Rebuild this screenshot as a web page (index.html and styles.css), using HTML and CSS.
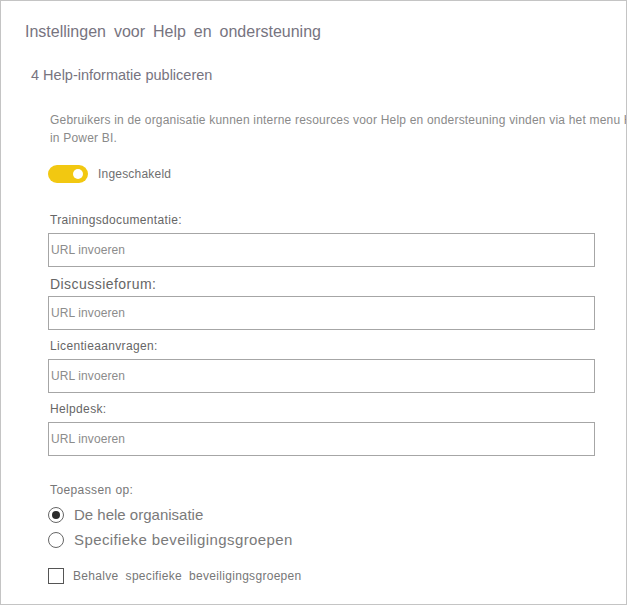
FILE: index.html
```html
<!DOCTYPE html>
<html lang="nl">
<head>
<meta charset="utf-8">
<title>Instellingen voor Help en ondersteuning</title>
<link rel="stylesheet" href="styles.css">
</head>
<body>
<div class="frame">
  <h1 class="title">Instellingen voor Help en ondersteuning</h1>
  <h2 class="subtitle">4 Help-informatie publiceren</h2>
  <div class="section">
    <p class="desc">Gebruikers in de organisatie kunnen interne resources voor Help en ondersteuning vinden via het menu Help<br>in Power BI.</p>
    <div class="toggle-row">
      <span class="toggle"><span class="knob"></span></span>
      <span class="toggle-label">Ingeschakeld</span>
    </div>
    <div class="field first">
      <label class="label">Trainingsdocumentatie:</label>
      <div class="input">URL invoeren</div>
    </div>
    <div class="field">
      <label class="label big">Discussieforum:</label>
      <div class="input">URL invoeren</div>
    </div>
    <div class="field">
      <label class="label">Licentieaanvragen:</label>
      <div class="input">URL invoeren</div>
    </div>
    <div class="field">
      <label class="label">Helpdesk:</label>
      <div class="input">URL invoeren</div>
    </div>
    <div class="apply">Toepassen op:</div>
    <div class="radio-row"><span class="radio checked"></span><span>De hele organisatie</span></div>
    <div class="radio-row"><span class="radio"></span><span class="wide">Specifieke beveiligingsgroepen</span></div>
    <div class="check-row"><span class="checkbox"></span><span class="check-label">Behalve specifieke beveiligingsgroepen</span></div>
  </div>
</div>
</body>
</html>
```

FILE: styles.css
```css
html, body {
  margin: 0;
  padding: 0;
  background: #ffffff;
}

body {
  font-family: "Liberation Sans", Arial, sans-serif;
  color: #6f6f6f;
}

.frame {
  width: 627px;
  height: 605px;
  box-sizing: border-box;
  border: 1px solid #c4c4c4;
  padding-left: 24px;
  overflow: hidden;
}

.title {
  margin: 20px 0 0 0;
  font-size: 16px;
  line-height: 22px;
  font-weight: normal;
  color: #77747f;
  word-spacing: 3.5px;
}

.subtitle {
  margin: 22px 0 0 6px;
  font-size: 14.5px;
  line-height: 20px;
  font-weight: normal;
  color: #77747f;
}

.section {
  padding-left: 25px;
}

.desc {
  margin: 26px 0 0 0;
  width: 620px;
  font-size: 12px;
  line-height: 18px;
  color: #8a8a8a;
  letter-spacing: 0.2px;
  white-space: nowrap;
}

.toggle-row {
  margin-top: 17px;
  display: flex;
  align-items: center;
  gap: 10px;
  height: 20px;
  margin-left: -2px;
}

.toggle {
  width: 40px;
  height: 18px;
  border-radius: 9px;
  background: #f2c811;
  display: flex;
  align-items: center;
  justify-content: flex-end;
  padding-right: 5px;
  box-sizing: border-box;
}

.knob {
  width: 10px;
  height: 10px;
  border-radius: 50%;
  background: #ffffff;
}

.toggle-label {
  font-size: 12px;
  color: #6f6f6f;
  letter-spacing: 0.2px;
}

.field {
  margin-top: 8px;
}

.field.first {
  margin-top: 28px;
}

.label {
  display: block;
  font-size: 12px;
  line-height: 16px;
  color: #666666;
  letter-spacing: 0.35px;
  margin-bottom: 5px;
}

.label.big {
  font-size: 14px;
  line-height: 18px;
  letter-spacing: 0.45px;
  margin-bottom: 3px;
}

.input {
  margin-left: -2px;
  width: 547px;
  height: 34px;
  box-sizing: border-box;
  border: 1px solid #a6a6a6;
  padding-left: 2px;
  font-size: 12px;
  line-height: 32px;
  color: #8c8c8c;
  letter-spacing: 0.1px;
}

.apply {
  margin-top: 26px;
  font-size: 12px;
  line-height: 16px;
  color: #777777;
  letter-spacing: 0.4px;
}

.radio-row {
  margin-top: 0;
  display: flex;
  align-items: center;
  gap: 10px;
  height: 25px;
  margin-left: -2px;
  font-size: 15px;
  color: #7a7a7a;
}

.radio-row .wide {
  letter-spacing: 0.4px;
}

.apply + .radio-row {
  margin-top: 4px;
}

.radio {
  width: 16px;
  height: 16px;
  box-sizing: border-box;
  border: 1px solid #666666;
  border-radius: 50%;
  display: flex;
  align-items: center;
  justify-content: center;
}

.radio.checked::after {
  content: "";
  width: 8px;
  height: 8px;
  border-radius: 50%;
  background: #2b2b2b;
}

.check-row {
  margin-top: 14px;
  display: flex;
  align-items: center;
  gap: 9px;
  height: 20px;
  margin-left: -2px;
}

.checkbox {
  width: 16px;
  height: 16px;
  box-sizing: border-box;
  border: 1px solid #555555;
}

.check-label {
  font-size: 12px;
  color: #777777;
  letter-spacing: 0.3px;
  word-spacing: 3.5px;
}
```
